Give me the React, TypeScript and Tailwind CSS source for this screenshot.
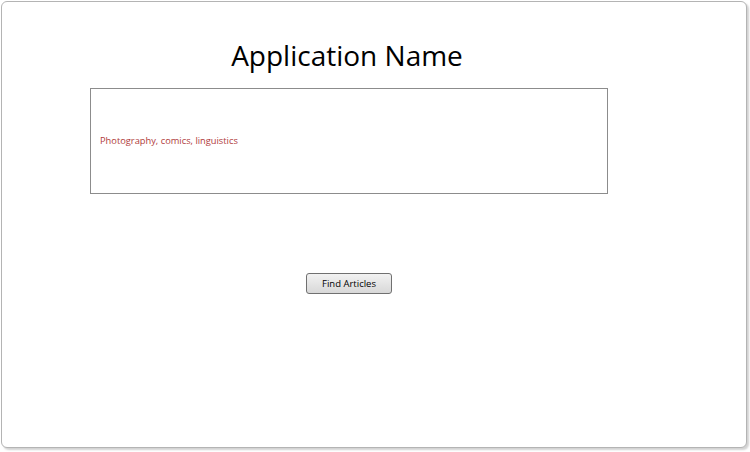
const App = () => {
    return (
        <div className="w-[750px] h-[452px] bg-white pt-px pl-px" style={{ fontFamily: '"Open Sans", "Noto Sans", sans-serif' }}>
            <div className="w-[746px] h-[447px] rounded-[6px] border border-[#b4b4b4] shadow-[2px_2px_2px_rgba(0,0,0,0.18)] bg-white">
                <div className="ml-[88px] w-[518px] flex flex-col items-center">
                    {/* Title */}
                    <h1 className="mt-[35px] mr-[4px] h-[36px] text-[28px] leading-[36px] text-black">Application Name</h1>

                    {/* Interests box */}
                    <div className="mt-[15px] w-[518px] h-[106px] border border-[#8c8c8c] flex items-center px-[9px]">
                        <span className="text-[9.3px] text-[#b03a3a]">Photography, comics, linguistics</span>
                    </div>

                    {/* Button */}
                    <button className="mt-[79px] w-[86px] h-[21px] rounded-[3px] border border-[#707070] bg-gradient-to-b from-[#f2f2f2] to-[#d8d8d8] text-[9.5px] text-black leading-none">
                        Find Articles
                    </button>
                </div>
            </div>
        </div>
    );
};

export default App;
